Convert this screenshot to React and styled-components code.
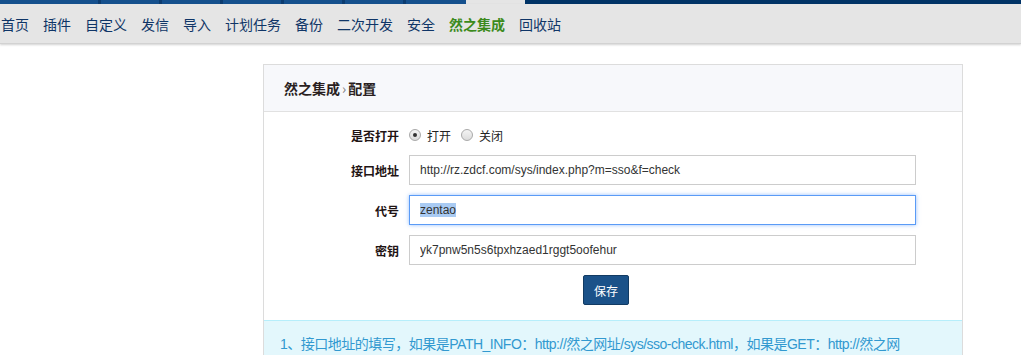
import React, { useEffect, useRef } from 'react'
import styled, { createGlobalStyle } from 'styled-components'

const GlobalStyle = createGlobalStyle`
  html, body {
    margin: 0;
    padding: 0;
    background: #fff;
    font-family: "Liberation Sans", Arial, "Noto Sans CJK SC", sans-serif;
    font-size: 12px;
    color: #333;
  }
  ::selection {
    background: #a9cbf3;
  }
`

const navItems = ['首页', '插件', '自定义', '发信', '导入', '计划任务', '备份', '二次开发', '安全', '然之集成', '回收站']

function App() {
  const codeRef = useRef(null)

  useEffect(() => {
    if (codeRef.current) {
      codeRef.current.focus()
      codeRef.current.select()
    }
  }, [])

  return (
    <>
      <GlobalStyle />
      <TopStrip>
        <Tabs>
          {[98, 58, 58, 58, 58, 58, 60].map((w, i) => (
            <Tab key={i} style={{ width: w }} />
          ))}
        </Tabs>
        <Gap />
        <DarkBar />
      </TopStrip>

      <Nav>
        {navItems.map((item) => (
          <NavItem key={item} active={item === '然之集成'}>
            {item}
          </NavItem>
        ))}
      </Nav>

      <Panel>
        <PanelHead>
          然之集成<Arrow>›</Arrow>配置
        </PanelHead>

        <PanelBody>
          <Row>
            <Label>是否打开</Label>
            <Radios>
              <RadioItem>
                <Radio checked />
                打开
              </RadioItem>
              <RadioItem>
                <Radio />
                关闭
              </RadioItem>
            </Radios>
          </Row>
          <Row>
            <Label>接口地址</Label>
            <Input defaultValue="http://rz.zdcf.com/sys/index.php?m=sso&f=check" />
          </Row>
          <Row>
            <Label>代号</Label>
            <Input ref={codeRef} defaultValue="zentao" />
          </Row>
          <Row>
            <Label>密钥</Label>
            <Input defaultValue="yk7pnw5n5s6tpxhzaed1rggt5oofehur" />
          </Row>
          <ButtonRow>
            <SaveButton>保存</SaveButton>
          </ButtonRow>
        </PanelBody>

        <Notice>
          1、接口地址的填写，如果是PATH_INFO：http://然之网址/sys/sso-check.html，如果是GET：http://然之网址/sys/index.php?m=sso&amp;f=check
        </Notice>
      </Panel>
    </>
  )
}

export default App

const TopStrip = styled.div`
  display: flex;
  height: 4px;
  background: #e5e5e5;
`

const Tabs = styled.div`
  display: flex;
  background: #0c3c70;
`

const Tab = styled.div`
  height: 4px;
  background: #15508d;
  & + & {
    margin-left: 3px;
  }
`

const Gap = styled.div`
  width: 59px;
`

const DarkBar = styled.div`
  flex: 1;
  background: #003366;
`

const Nav = styled.div`
  display: flex;
  align-items: center;
  gap: 14px;
  height: 40px;
  padding-left: 1px;
  background: #e5e5e5;
  box-shadow: 0 1px 2px rgba(0, 0, 0, 0.18);
  border-bottom: 1px solid #d2d2d2;
  box-sizing: border-box;
`

const NavItem = styled.span`
  font-family: "Noto Sans CJK SC", "Liberation Sans", sans-serif;
  font-size: 14px;
  line-height: 20px;
  color: ${(p) => (p.active ? '#3c8a1c' : '#0f3567')};
  font-weight: ${(p) => (p.active ? 'bold' : 'normal')};
`

const Panel = styled.div`
  margin: 20px 0 0 263px;
  width: 698px;
  border: 1px solid #dcdcdc;
  border-bottom: none;
  background: #fff;
`

const PanelHead = styled.div`
  height: 46px;
  line-height: 46px;
  padding-left: 20px;
  background: #f7f8fb;
  border-bottom: 1px solid #e1e1e1;
  font-family: "Noto Sans CJK SC", sans-serif;
  font-size: 14px;
  font-weight: bold;
  color: #2a1f1f;
`

const Arrow = styled.span`
  font-weight: normal;
  color: #777;
  margin: 0 2px;
`

const PanelBody = styled.div`
  padding-top: 13px;
  display: flex;
  flex-direction: column;
  gap: 10px;
`

const Row = styled.div`
  display: flex;
  align-items: center;
  gap: 10px;
`

const Label = styled.div`
  width: 135px;
  text-align: right;
  font-family: "Noto Sans CJK SC", sans-serif;
  font-size: 12px;
  font-weight: bold;
  color: #1f1414;
`

const Radios = styled.div`
  display: flex;
  align-items: center;
  gap: 10px;
  height: 20px;
`

const RadioItem = styled.label`
  display: flex;
  align-items: center;
  gap: 6px;
  font-family: "Noto Sans CJK SC", sans-serif;
  font-size: 12px;
  color: #222;
`

const Radio = styled.span`
  position: relative;
  width: 10px;
  height: 10px;
  border-radius: 50%;
  border: 1px solid #a9a9a9;
  background: linear-gradient(#f4f4f4, #dcdcdc);
  &::after {
    content: '';
    display: ${(p) => (p.checked ? 'block' : 'none')};
    position: absolute;
    left: 3px;
    top: 3px;
    width: 4px;
    height: 4px;
    border-radius: 50%;
    background: #333;
  }
`

const Input = styled.input`
  width: 507px;
  height: 30px;
  box-sizing: border-box;
  padding: 0 10px;
  border: 1px solid #ccc;
  border-radius: 0;
  font-family: "Liberation Sans", Arial, sans-serif;
  font-size: 12px;
  color: #333;
  background: #fff;
  outline: none;
  &:focus {
    border-color: #5a9bf6;
    box-shadow: 0 0 4px rgba(82, 150, 250, 0.6);
  }
`

const ButtonRow = styled.div`
  padding-left: 319px;
`

const SaveButton = styled.button`
  width: 46px;
  height: 30px;
  padding: 0;
  border: 1px solid #123b63;
  border-radius: 2px;
  background: #1b5289;
  color: #fff;
  font-family: "Noto Sans CJK SC", sans-serif;
  font-size: 12px;
`

const Notice = styled.div`
  margin-top: 15px;
  padding: 12px 16px 20px;
  background: #e3f7fc;
  border-top: 1px solid #b6eefb;
  font-family: "Liberation Sans", Arial, "Noto Sans CJK SC", sans-serif;
  font-size: 14px;
  letter-spacing: -0.5px;
  line-height: 22px;
  color: #3299d0;
`
